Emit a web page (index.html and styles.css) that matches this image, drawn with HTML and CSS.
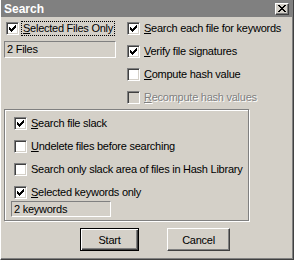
FILE: index.html
```html
<!DOCTYPE html>
<html lang="en">
<head>
    <meta charset="UTF-8">
    <title>Search</title>
    <link rel="stylesheet" href="styles.css">
</head>
<body>
    <div class="window">
        <div class="titlebar">
            <span class="title">Search</span>
            <span class="close">
                <svg width="8" height="7" viewBox="0 0 8 7" shape-rendering="crispEdges">
                    <path d="M0 0h2v1h1v1h2v-1h1v-1h2v1h-1v1h-1v1h-1v1h1v1h1v1h1v1h-2v-1h-1v-1h-2v1h-1v1h-2v-1h1v-1h1v-1h1v-1h-1v-1h-1v-1h-1z" fill="#000"/>
                </svg>
            </span>
        </div>
        <div class="content">
            <div class="top">
                <div class="col-left">
                    <div class="row">
                        <span class="box checked"></span>
                        <span class="label focus"><u>S</u>elected Files Only</span>
                    </div>
                    <div class="field wide">2 Files</div>
                </div>
                <div class="col-right">
                    <div class="row">
                        <span class="box checked"></span>
                        <span class="label"><u>S</u>earch each file for keywords</span>
                    </div>
                    <div class="row">
                        <span class="box checked"></span>
                        <span class="label"><u>V</u>erify file signatures</span>
                    </div>
                    <div class="row">
                        <span class="box"></span>
                        <span class="label"><u>C</u>ompute hash value</span>
                    </div>
                    <div class="row disabled">
                        <span class="box"></span>
                        <span class="label"><u>R</u>ecompute hash values</span>
                    </div>
                </div>
            </div>
            <div class="group">
                <div class="row">
                    <span class="box checked"></span>
                    <span class="label"><u>S</u>earch file slack</span>
                </div>
                <div class="row">
                    <span class="box"></span>
                    <span class="label"><u>U</u>ndelete files before searching</span>
                </div>
                <div class="row">
                    <span class="box"></span>
                    <span class="label">Search only slack area of files in Hash Library</span>
                </div>
                <div class="row">
                    <span class="box checked"></span>
                    <span class="label"><u>S</u>elected keywords only</span>
                </div>
                <div class="field narrow">2 keywords</div>
            </div>
            <div class="buttons">
                <button class="btn default">Start</button>
                <button class="btn cancel">Cancel</button>
            </div>
        </div>
    </div>
</body>
</html>
```

FILE: styles.css
```css
*{
    margin: 0;
    padding: 0;
    box-sizing: border-box;
}
body{
    width: 294px;
    height: 260px;
    overflow: hidden;
    background: #d4d0c8;
    font-family: "Liberation Sans", Arial, sans-serif;
    font-size: 11px;
    letter-spacing: -0.25px;
    color: #000;
}
.window{
    width: 294px;
    height: 260px;
    border-left: 1px solid #fff;
    border-right: 1px solid #404040;
    border-bottom: 1px solid #404040;
    box-shadow: inset -1px -1px #808080;
}
.titlebar{
    height: 17px;
    margin-right: 1px;
    background: #808080;
    color: #fff;
    display: flex;
    align-items: center;
    justify-content: space-between;
    padding: 0 3px 0 3px;
}
.title{
    font-weight: bold;
    font-size: 12px;
    letter-spacing: 0;
}
.close{
    width: 14px;
    height: 12px;
    background: #d4d0c8;
    border-top: 1px solid #fff;
    border-left: 1px solid #fff;
    border-right: 1px solid #404040;
    border-bottom: 1px solid #404040;
    box-shadow: inset -1px -1px #808080;
    display: flex;
    align-items: center;
    justify-content: center;
}
.close svg{
    display: block;
}
.content{
    padding: 4px 0 0 3px;
}
.top{
    display: flex;
    gap: 9px;
}
.col-left{
    width: 112px;
    display: flex;
    flex-direction: column;
    gap: 5px;
}
.col-right{
    display: flex;
    flex-direction: column;
    gap: 8px;
}
.row{
    height: 15px;
    display: flex;
    align-items: center;
    padding-left: 2px;
    white-space: nowrap;
}
.box{
    width: 13px;
    height: 13px;
    flex: none;
    background: #fff;
    border-top: 1px solid #808080;
    border-left: 1px solid #808080;
    border-right: 1px solid #fff;
    border-bottom: 1px solid #fff;
    box-shadow: inset 1px 1px #404040, inset -1px -1px #d4d0c8;
}
.box.checked{
    background: #fff url("data:image/svg+xml,%3Csvg xmlns='http://www.w3.org/2000/svg' width='7' height='7' shape-rendering='crispEdges'%3E%3Cpath d='M6 0h1v3h-1v1h-1v1h-1v1h-1v1h-1v-1h-1v-1h-1v-3h1v1h1v1h1v-1h1v-1h1z'/%3E%3C/svg%3E") no-repeat 2px 2px;
}
.label{
    margin-left: 2px;
    height: 15px;
    line-height: 13px;
    padding: 0 1px;
    border: 1px solid transparent;
}
.label.focus{
    border: 1px dotted #000;
}
.disabled .box{
    background: #d4d0c8;
}
.disabled .label{
    color: #808080;
    text-shadow: 1px 1px #fff;
}
.field{
    height: 17px;
    line-height: 15px;
    padding-left: 2px;
    border-top: 1px solid #808080;
    border-left: 1px solid #808080;
    border-right: 1px solid #fff;
    border-bottom: 1px solid #fff;
}
.field.wide{
    width: 112px;
}
.field.narrow{
    width: 100px;
    height: 16px;
    line-height: 14px;
    margin-left: -2px;
}
.group{
    width: 245px;
    margin-top: 4px;
    padding: 6px 0 3px 8px;
    border: 1px solid #808080;
    box-shadow: inset 1px 1px #fff, 1px 1px #fff;
    display: flex;
    flex-direction: column;
    gap: 8px;
}
.group .row{
    padding-left: 1px;
}
.group .field{
    margin-top: -7px;
}
.buttons{
    display: flex;
    padding-left: 76px;
    margin-top: 7px;
    gap: 28px;
}
.btn{
    height: 23px;
    font-family: inherit;
    font-size: 11px;
    letter-spacing: inherit;
    color: #000;
    background: #d4d0c8;
    border-top: 1px solid #fff;
    border-left: 1px solid #fff;
    border-right: 1px solid #404040;
    border-bottom: 1px solid #404040;
    box-shadow: inset -1px -1px #808080;
}
.btn.default{
    width: 59px;
    border: 1px solid #000;
    box-shadow: inset 1px 1px #fff, inset -1px -1px #404040, inset -2px -2px #808080;
}
.btn.cancel{
    width: 63px;
}
```
